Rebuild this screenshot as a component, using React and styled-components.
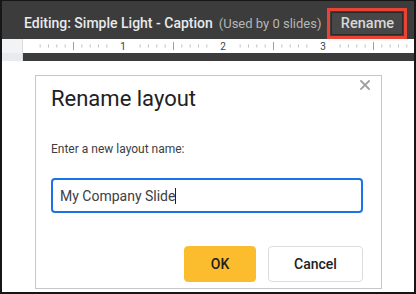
import React from 'react'
import styled, { createGlobalStyle } from 'styled-components'

const Global = createGlobalStyle`
  html, body { margin: 0; padding: 0; background: #fff; }
  * { box-sizing: border-box; }
`

const TICK = 100 / 12

function Ruler() {
    const ticks = []
    for (let i = 1; i < 48; i++) {
        const x = i * TICK
        if (i % 12 === 0) {
            ticks.push(
                <text key={i} x={x} y={10.5} fontSize="10" fill="#3c4043" textAnchor="middle" fontFamily="Roboto, sans-serif">
                    {i / 12}
                </text>
            )
        } else if (i % 12 === 1 || i % 12 === 11) {
            continue
        } else if (i % 6 === 0) {
            ticks.push(<rect key={i} x={x} y={3} width={1} height={8} fill="#9aa0a6" />)
        } else {
            ticks.push(<rect key={i} x={x} y={5.5} width={1} height={3} fill="#bdc1c6" />)
        }
    }
    return (
        <svg width="391" height="14" viewBox="0 0 391 14">
            {ticks}
        </svg>
    )
}

export default function App() {
    return (
        <>
            <Global />
            <Frame>
                <Header>
                    <Title>Editing: Simple Light - Caption</Title>
                    <Usage>(Used by 0 slides)</Usage>
                    <Highlight>
                        <RenameButton>Rename</RenameButton>
                    </Highlight>
                </Header>
                <RulerRow>
                    <Corner />
                    <RulerTrack><Ruler /></RulerTrack>
                </RulerRow>
                <StripRow>
                    <Corner $shade="#e8eaed" />
                    <Strip />
                </StripRow>
                <Canvas>
                    <Dialog>
                        <Close aria-label="close">
                            <svg width="10" height="10" viewBox="0 0 10 10">
                                <path d="M1 1 L9 9 M9 1 L1 9" stroke="#9e9e9e" strokeWidth="1.8" strokeLinecap="square" />
                            </svg>
                        </Close>
                        <DialogTitle>Rename layout</DialogTitle>
                        <Label>Enter a new layout name:</Label>
                        <Field>
                            My Company Slide<Caret />
                        </Field>
                        <Actions>
                            <Button $primary>OK</Button>
                            <Button>Cancel</Button>
                        </Actions>
                    </Dialog>
                </Canvas>
            </Frame>
        </>
    )
}

const Frame = styled.div`
    width: 416px;
    height: 294px;
    border: 2px solid #161616;
    border-top-width: 1px;
    display: flex;
    flex-direction: column;
    font-family: Roboto, 'Liberation Sans', sans-serif;
    overflow: hidden;
`

const Header = styled.div`
    height: 38px;
    background: #3c3c3c;
    display: flex;
    align-items: center;
    padding: 7px 0 0 22px;
`

const Title = styled.span`
    color: #e8eaed;
    font-size: 14px;
    font-weight: 500;
    margin-bottom: 1px;
    white-space: nowrap;
`

const Usage = styled.span`
    color: #b6b6b6;
    font-size: 13px;
    margin: 0 6px 0 6px;
    white-space: nowrap;
`

const Highlight = styled.div`
    border: 3px solid #ea4335;
    padding: 1px;
    display: flex;
`

const RenameButton = styled.div`
    width: 72px;
    height: 23px;
    background: #474747;
    border: 1px solid #2b2b2b;
    border-radius: 2px;
    color: #d8d8d8;
    font-size: 14.5px;
    font-weight: 500;
    display: flex;
    align-items: center;
    justify-content: center;
`

const RulerRow = styled.div`
    height: 14px;
    display: flex;
    background: #fff;
`

const Corner = styled.div`
    width: 21px;
    background: ${p => p.$shade || '#f1f3f4'};
    border-right: 1px solid #dadce0;
`

const RulerTrack = styled.div`
    flex: 1;
    display: flex;
`

const StripRow = styled.div`
    height: 8px;
    display: flex;
`

const Strip = styled.div`
    flex: 1;
    background: #3c3c3c;
`

const Canvas = styled.div`
    flex: 1;
    padding: 14px 0 0 33px;
`

const Dialog = styled.div`
    position: relative;
    width: 347px;
    height: 214px;
    border: 1px solid #c6c6c6;
    padding: 10px 18px 0 15px;
    display: flex;
    flex-direction: column;
`

const Close = styled.div`
    position: absolute;
    top: 4px;
    right: 11px;
    display: flex;
`

const DialogTitle = styled.h2`
    margin: 0;
    font-size: 22px;
    font-weight: 400;
    line-height: 26px;
    color: #202124;
`

const Label = styled.p`
    margin: 30px 0 0;
    font-size: 12px;
    line-height: 14px;
    color: #3c4043;
`

const Field = styled.div`
    margin-top: 22px;
    height: 35px;
    border: 2px solid #1a73e8;
    border-radius: 4px;
    padding-left: 7px;
    display: flex;
    align-items: center;
    font-size: 14px;
    color: #3c4043;
`

const Caret = styled.span`
    display: inline-block;
    width: 1px;
    height: 16px;
    background: #202124;
`

const Actions = styled.div`
    margin-top: 33px;
    display: flex;
    justify-content: flex-end;
    gap: 12px;
`

const Button = styled.div`
    height: 36px;
    width: ${p => (p.$primary ? '72px' : '95px')};
    border-radius: 4px;
    background: ${p => (p.$primary ? '#fbbc2e' : '#fff')};
    border: 1px solid ${p => (p.$primary ? '#fbbc2e' : '#dadce0')};
    color: #202124;
    font-size: 14px;
    font-weight: 500;
    display: flex;
    align-items: center;
    justify-content: center;
`
